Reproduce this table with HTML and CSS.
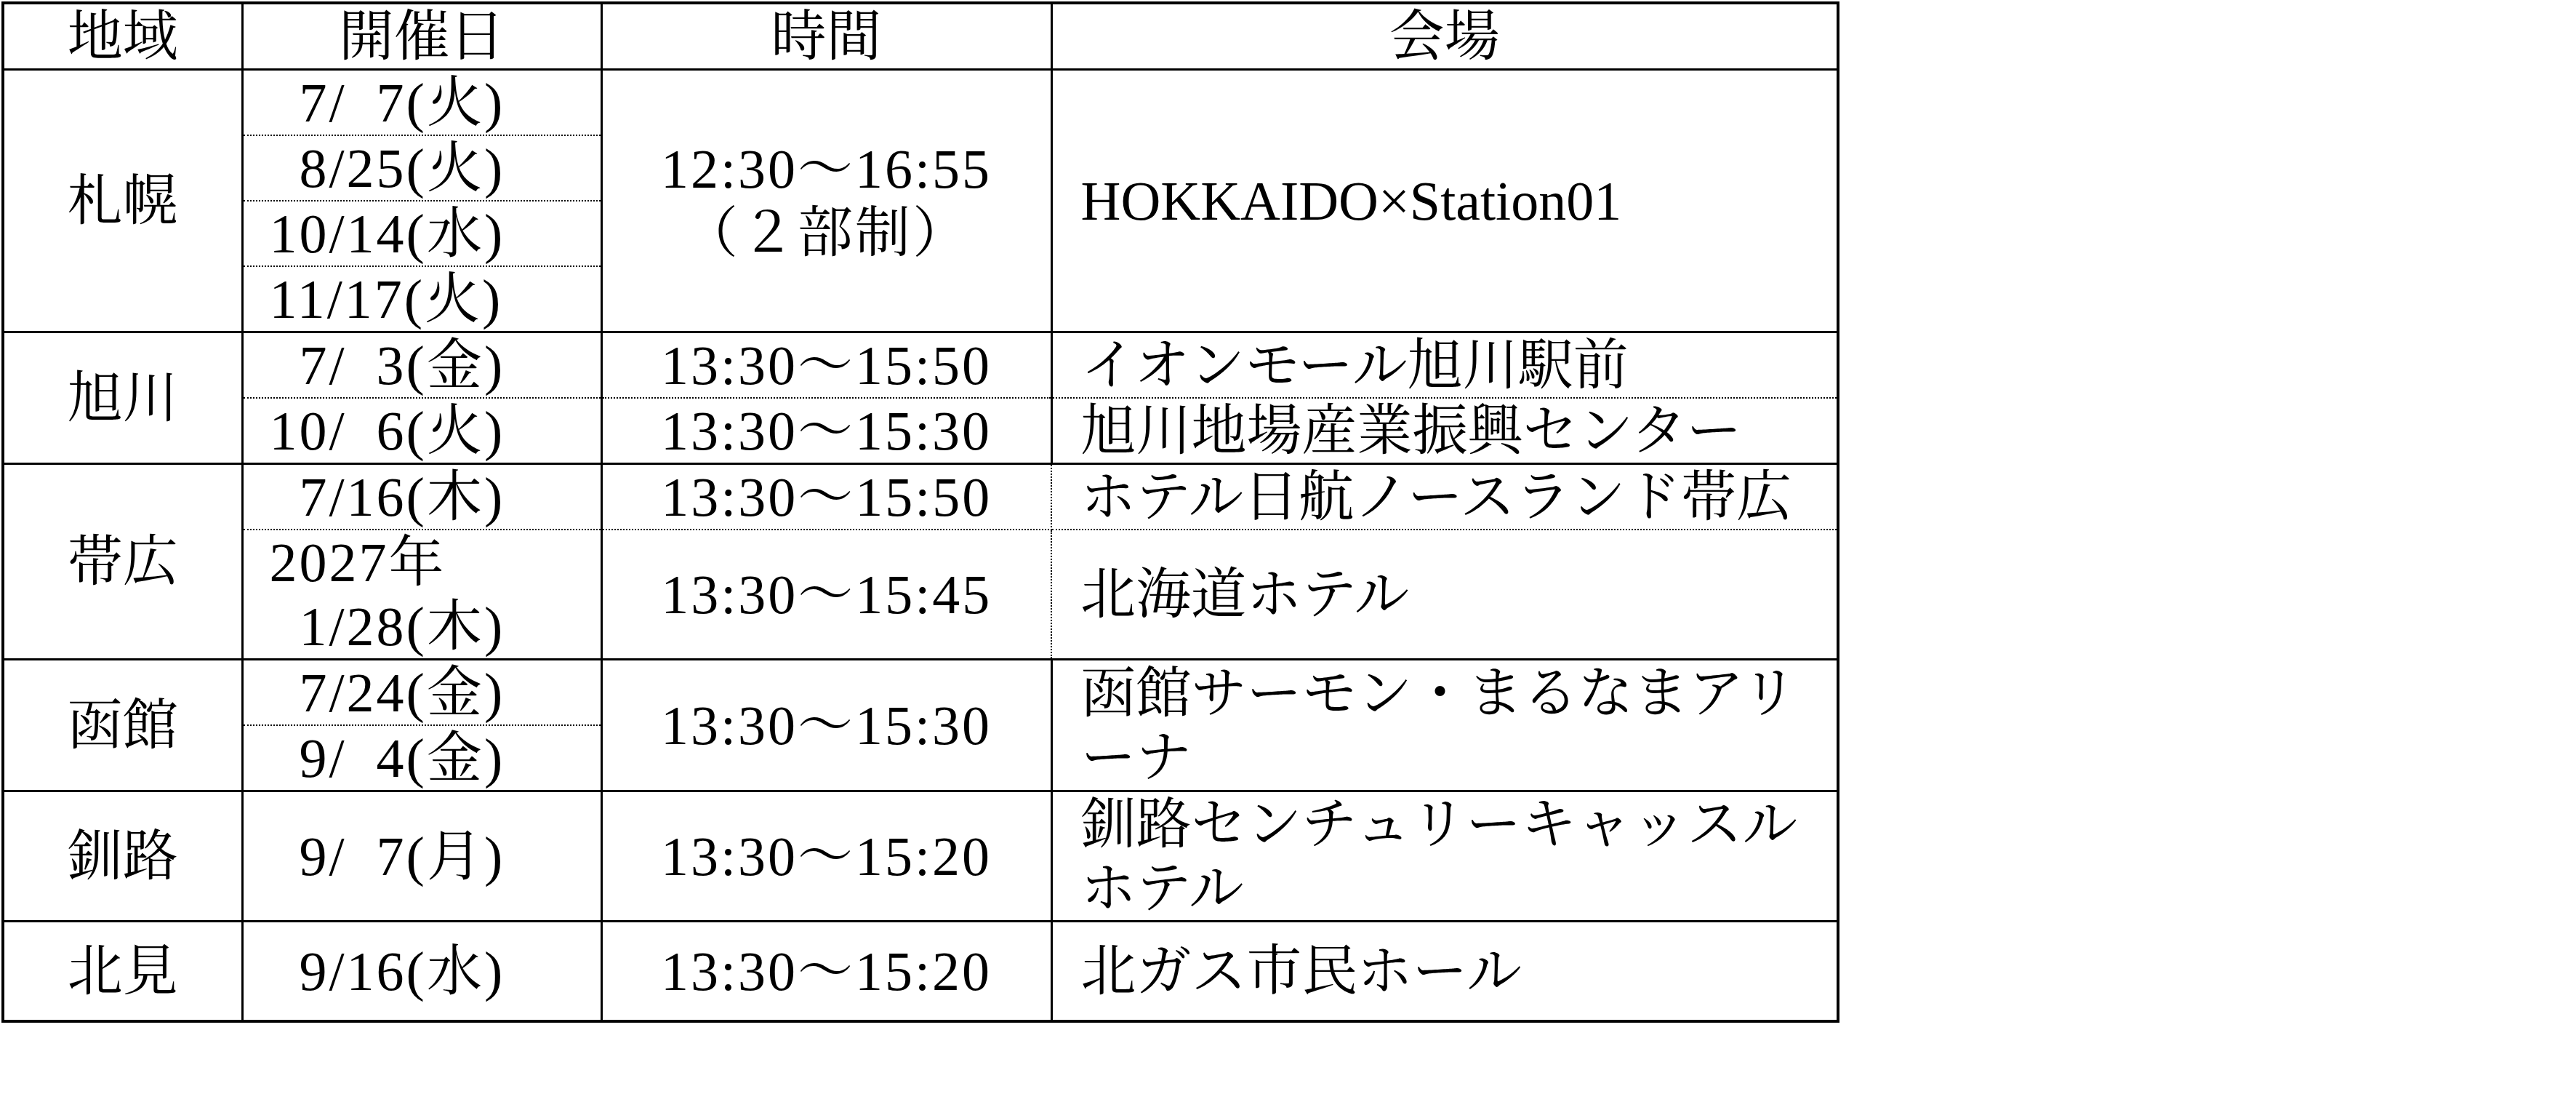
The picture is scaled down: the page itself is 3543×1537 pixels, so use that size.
FILE: index.html
```html
<!DOCTYPE html>
<html lang="ja">
<head>
<meta charset="utf-8">
<title>開催日程</title>
<link rel="stylesheet" href="styles.css">
</head>
<body>
<table class="schedule">
<colgroup><col class="c-region"><col class="c-date"><col class="c-time"><col class="c-venue"></colgroup>
<thead>
<tr><th>地域</th><th>開催日</th><th>時間</th><th>会場</th></tr>
</thead>
<tbody>
<tr><td class="region" rowspan="4">札幌</td><td class="date dbot"> 7/ 7(火)</td><td class="time" rowspan="4">12:30～16:55<br>（２部制）</td><td class="venue" rowspan="4">HOKKAIDO×Station01</td></tr>
<tr><td class="date dtop dbot"> 8/25(火)</td></tr>
<tr><td class="date dtop dbot">10/14(水)</td></tr>
<tr><td class="date dtop">11/17(火)</td></tr>

<tr><td class="region" rowspan="2">旭川</td><td class="date dbot"> 7/ 3(金)</td><td class="time dbot">13:30～15:50</td><td class="venue dbot">イオンモール旭川駅前</td></tr>
<tr><td class="date dtop">10/ 6(火)</td><td class="time dtop">13:30～15:30</td><td class="venue dtop">旭川地場産業振興センター</td></tr>

<tr><td class="region" rowspan="2">帯広</td><td class="date dbot"> 7/16(木)</td><td class="time dbot dright">13:30～15:50</td><td class="venue dbot dleft">ホテル日航ノースランド帯広</td></tr>
<tr><td class="date dtop">2027年<br> 1/28(木)</td><td class="time dtop dright">13:30～15:45</td><td class="venue dtop dleft">北海道ホテル</td></tr>

<tr><td class="region" rowspan="2">函館</td><td class="date dbot"> 7/24(金)</td><td class="time" rowspan="2">13:30～15:30</td><td class="venue" rowspan="2">函館サーモン・まるなまアリーナ</td></tr>
<tr><td class="date dtop"> 9/ 4(金)</td></tr>

<tr><td class="region">釧路</td><td class="date"> 9/ 7(月)</td><td class="time">13:30～15:20</td><td class="venue">釧路センチュリーキャッスルホテル</td></tr>

<tr class="tall"><td class="region">北見</td><td class="date"> 9/16(水)</td><td class="time">13:30～15:20</td><td class="venue">北ガス市民ホール</td></tr>
</tbody>
</table>
</body>
</html>
```

FILE: styles.css
```css
html, body {
  margin: 0;
  padding: 0;
  background: #ffffff;
}

.schedule {
  border-collapse: collapse;
  table-layout: fixed;
  width: 2524px;
  margin: 2px 0 0 2px;
  border: 4px solid #000000;
  font-family: "Liberation Serif", "Noto Serif CJK JP", "Noto Sans CJK JP", serif;
  font-size: 76px;
  line-height: 88px;
  color: #000000;
}

.c-region { width: 329px; }
.c-date { width: 494px; }
.c-time { width: 619px; }
.c-venue { width: 1082px; }

.schedule th,
.schedule td {
  border: 3px solid #000000;
  padding: 0;
  vertical-align: middle;
  font-weight: normal;
}

.schedule th {
  text-align: center;
}

.schedule .region {
  text-align: center;
}

.schedule .date {
  text-align: left;
  padding-left: 36px;
  white-space: pre;
  word-spacing: 0.25em;
  letter-spacing: 3px;
}

.schedule .time {
  text-align: center;
  letter-spacing: 3px;
}

.schedule .venue {
  text-align: left;
  padding: 0 38px 0 39px;
  line-break: loose;
}

.schedule .dbot { border-bottom: 2px dotted #000000; }
.schedule .dtop { border-top: 2px dotted #000000; }
.schedule .dright { border-right: 2px dotted #000000; }
.schedule .dleft { border-left: 2px dotted #000000; }

.schedule .tall td {
  height: 134px;
}
```
